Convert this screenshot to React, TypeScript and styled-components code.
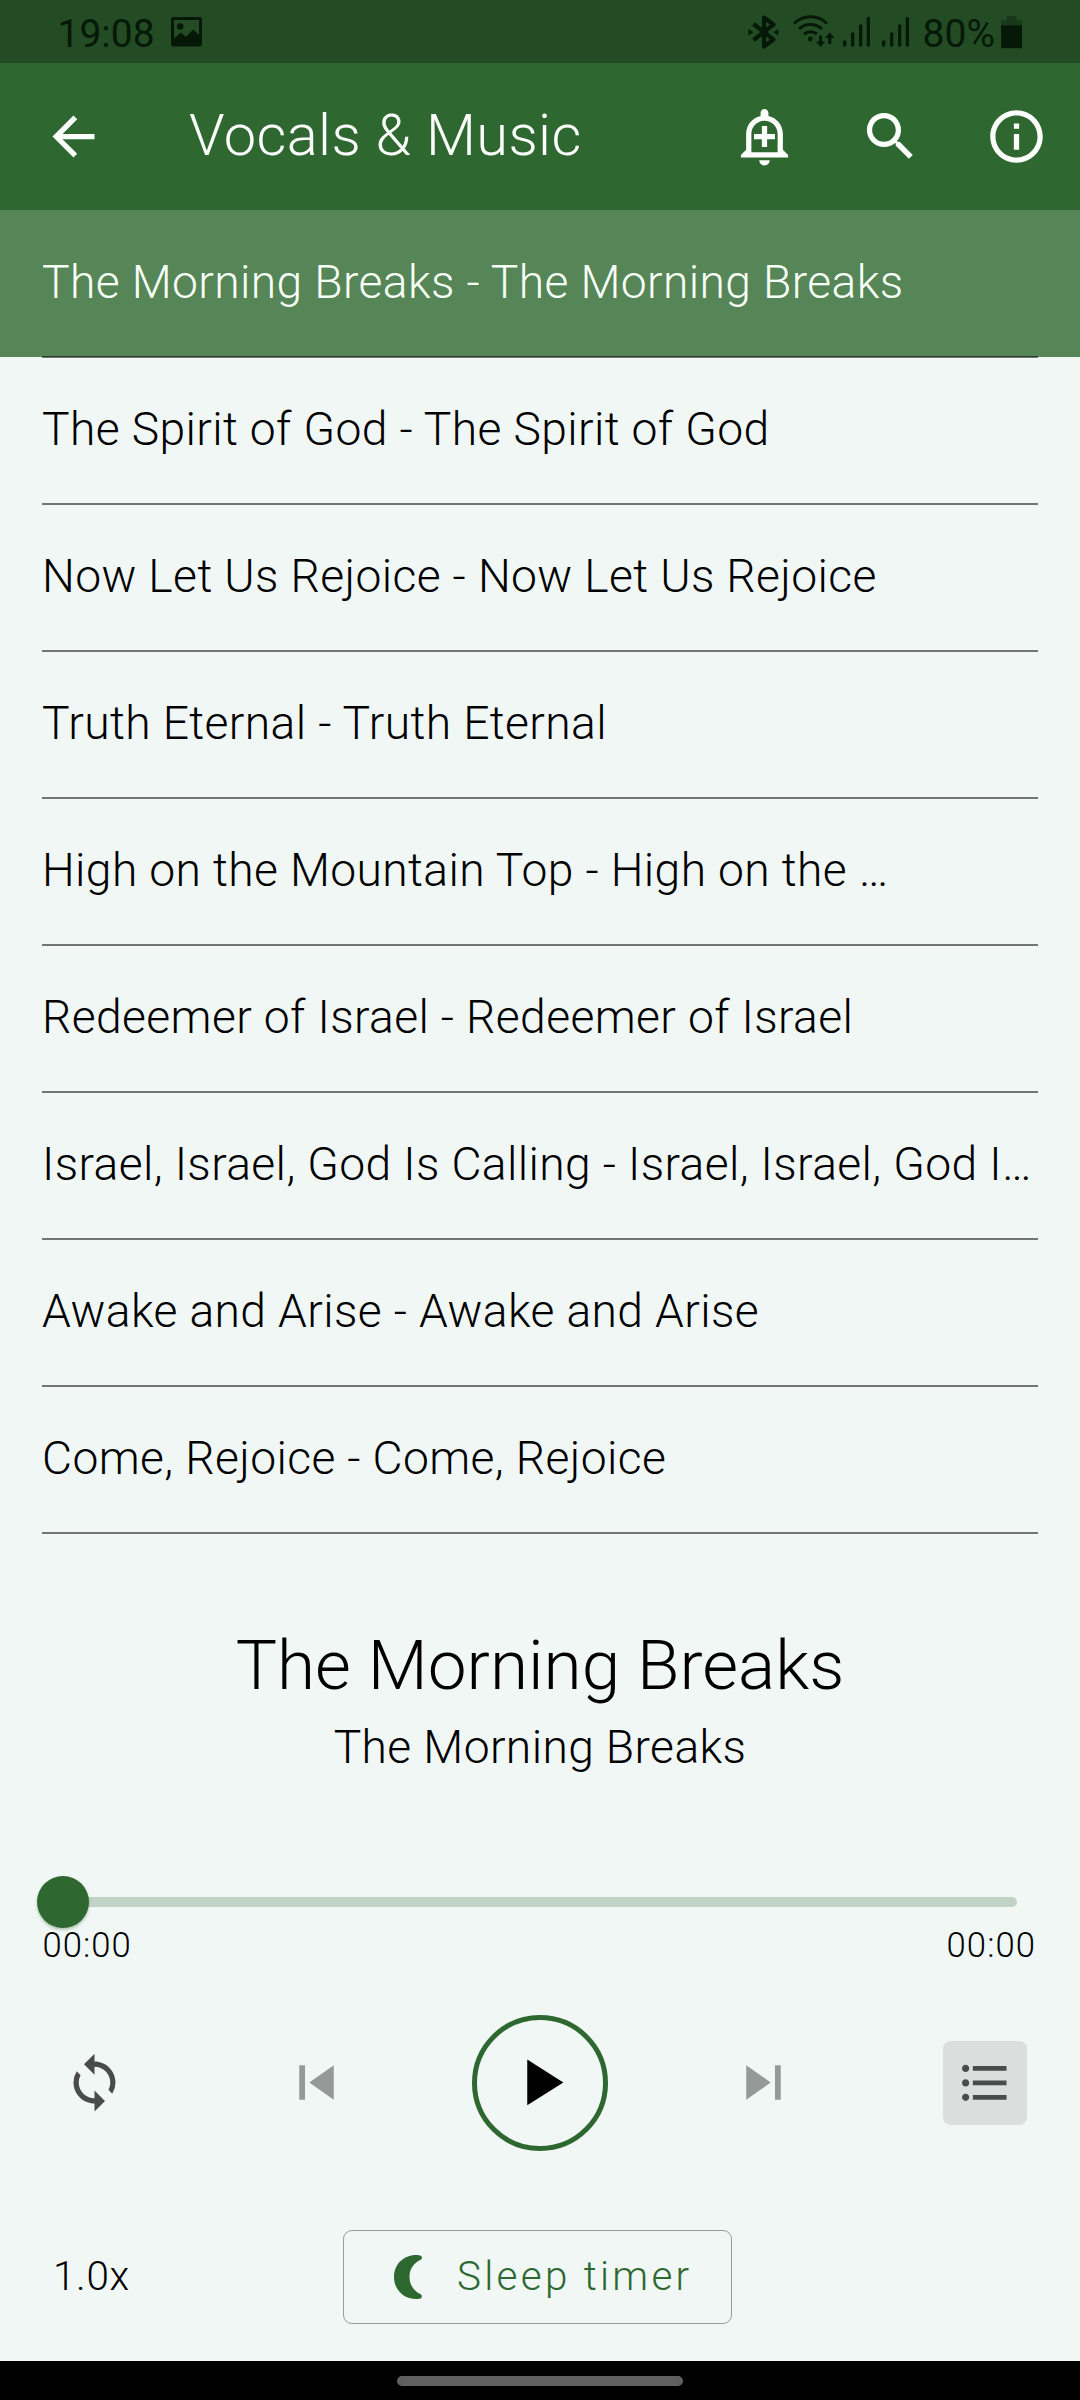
import React from "react";
import styled, { createGlobalStyle } from "styled-components";
import {
  MdArrowBack,
  MdFormatListBulleted,
  MdInfoOutline,
  MdPlayArrow,
  MdSearch,
  MdSkipNext,
  MdSkipPrevious,
  MdSync,
} from "react-icons/md";

const color = {
  primary: "#2e6830",
  primaryDark: "#234c24",
  selected: "#568558",
  surface: "#f0f7f5",
  statusInk: "#061807",
  icon: "#4a4c4b",
  disabled: "#959998",
};

const GlobalStyle = createGlobalStyle`
  * { box-sizing: border-box; }
  body {
    margin: 0;
    background: ${color.surface};
    font-family: Roboto, "Noto Sans", sans-serif;
    font-weight: 300;
    color: #000;
  }
  button {
    margin: 0;
    padding: 0;
    border: 0;
    background: none;
    font: inherit;
    color: inherit;
  }
  svg { display: block; flex: none; }
`;

const Screen = styled.div`
  display: flex;
  flex-direction: column;
  width: 1080px;
  height: 2400px;
  overflow: hidden;
  background: ${color.surface};
`;

/* ---------- system status bar ---------- */

const StatusBar = styled.div`
  display: flex;
  align-items: center;
  justify-content: space-between;
  height: 63px;
  padding: 0 58px 0 57.5px;
  background: ${color.primaryDark};
  color: ${color.statusInk};
`;

const StatusGroup = styled.div`
  display: flex;
  align-items: center;
`;

const StatusText = styled.span`
  padding-top: 4px;
  font-size: 39px;
  font-weight: 400;
  line-height: 40px;
`;

const Spacer = styled.span<{ $w: number }>`
  flex: none;
  width: ${(p) => p.$w}px;
`;

const PictureIcon = () => (
  <svg width="31" height="34" viewBox="0 0 31 34" fill="currentColor">
    <path
      fillRule="evenodd"
      d="M2.500 2h26A2.500 2.500 0 0 1 31 4.500V29a2.500 2.500 0 0 1-2.500 2.500h-26A2.500 2.500 0 0 1 0 29V4.500A2.500 2.500 0 0 1 2.500 2zM3 5v18.500l6.800-6 5 4.200 7.500-7.200 5.700 5.500V5z"
    />
    <circle cx="9.200" cy="11.500" r="3.300" />
  </svg>
);

const BluetoothIcon = () => (
  <svg width="32" height="34" viewBox="0 0 32 34">
    <path
      d="M5.500 9l20 15.500-9.500 7V2.500l9.500 7L5.500 25"
      fill="none"
      stroke="currentColor"
      strokeWidth="4.200"
      strokeLinejoin="round"
    />
    <path d="M0.500 14l5 3.300-5 3.300zM30.500 14l-5 3.300 5 3.300z" fill="currentColor" />
  </svg>
);

const WifiIcon = () => (
  <svg width="42" height="34" viewBox="0 0 42 34">
    <g fill="none" stroke="currentColor" strokeWidth="3">
      <path d="M1 8.500a23.500 23.500 0 0 1 33 0" />
      <path d="M6 14a17 17 0 0 1 23 0" />
      <path d="M11 19.200a9.800 9.800 0 0 1 13 0" />
      <path d="M27.500 20.500v8M36.800 29v-8" />
    </g>
    <circle cx="17.300" cy="24" r="2.400" fill="currentColor" />
    <path d="M22.700 26.500l4.800 5.500 4.800-5.500zM32 23l4.800-5.500 4.800 5.500z" fill="currentColor" />
  </svg>
);

const SignalIcon = () => (
  <svg width="27" height="34" viewBox="0 0 27 34" fill="currentColor">
    <rect x="0" y="25.500" width="3.300" height="6" rx="0.800" />
    <rect x="8" y="17.500" width="3.300" height="14" rx="0.800" />
    <rect x="16" y="9.500" width="3.300" height="22" rx="0.800" />
    <rect x="23.700" y="2" width="3.300" height="29.500" rx="0.800" />
  </svg>
);

const BatteryIcon = () => (
  <svg width="21" height="34" viewBox="0 0 21 34" fill="currentColor">
    <path d="M5.500 1h10v4.500H21v5H0v-5h5.500z" opacity="0.350" />
    <path d="M0 10.300h21V33.200H0z" />
  </svg>
);

/* ---------- app bar ---------- */

const AppBar = styled.header`
  display: flex;
  align-items: center;
  height: 147px;
  background: ${color.primary};
  color: #fcfffc;
`;

const BarButton = styled.button<{ $w?: number }>`
  display: flex;
  align-items: center;
  justify-content: center;
  width: ${(p) => p.$w ?? 126}px;
  height: 147px;
`;

const BarActions = styled.div`
  display: flex;
  margin-right: 1px;
`;

const BarTitle = styled.h1`
  flex: 1;
  margin: 0;
  padding: 0 0 4px 42px;
  font-size: 57.75px;
  font-weight: 300;
  line-height: 68px;
  letter-spacing: 0.39px;
  white-space: nowrap;
`;

const AddAlertIcon = () => (
  <svg width="63" height="63" viewBox="0 0 24 24" fill="currentColor">
    <path d="M10.010 21.010c0 1.100.89 1.990 1.990 1.990s1.990-.89 1.990-1.990h-3.980zM12 6c2.760 0 5 2.240 5 5v7H7v-7c0-2.760 2.240-5 5-5zm0-4.500c-.83 0-1.500.67-1.500 1.500v1.170C7.360 4.850 5 7.650 5 11v6l-2 2v1h18v-1l-2-2v-6c0-3.350-2.360-6.150-5.500-6.830V3c0-.83-.67-1.500-1.500-1.500zM13 8h-2v3H8v2h3v3h2v-3h3v-2h-3V8z" />
  </svg>
);

/* ---------- track list ---------- */

const TrackList = styled.ul`
  margin: 0;
  padding: 0;
  list-style: none;
`;

const Track = styled.li<{ $selected: boolean }>`
  position: relative;
  height: 147px;
  padding: 0 42px;
  background: ${(p) => (p.$selected ? color.selected : "transparent")};
  color: ${(p) => (p.$selected ? "#f8fff6" : "#000")};
  font-size: 46.2px;
  line-height: 145px;
  letter-spacing: 0.39px;
  white-space: nowrap;

  &::after {
    content: "";
    position: absolute;
    left: 42px;
    right: 42px;
    bottom: -1px;
    height: 2px;
    background: rgba(0, 0, 0, 0.52);
  }
`;

const tracks = [
  "The Morning Breaks - The Morning Breaks",
  "The Spirit of God - The Spirit of God",
  "Now Let Us Rejoice - Now Let Us Rejoice",
  "Truth Eternal - Truth Eternal",
  "High on the Mountain Top - High on the …",
  "Redeemer of Israel - Redeemer of Israel",
  "Israel, Israel, God Is Calling - Israel, Israel, God I…",
  "Awake and Arise - Awake and Arise",
  "Come, Rejoice - Come, Rejoice",
];

/* ---------- player ---------- */

const Player = styled.section`
  display: flex;
  flex-direction: column;
  flex: 1;
  padding-top: 92px;
`;

const NowPlaying = styled.h2`
  margin: 0;
  font-size: 69.3px;
  font-weight: 300;
  line-height: 82px;
  text-align: center;
`;

const Album = styled.p`
  margin: 13px 0 0;
  font-size: 46.2px;
  line-height: 54px;
  letter-spacing: 0.39px;
  text-align: center;
`;

const Slider = styled.div`
  position: relative;
  display: flex;
  align-items: center;
  height: 44px;
  margin-top: 106px;
  padding: 0 63px 0 58px;
`;

const SliderTrack = styled.div`
  flex: 1;
  height: 10px;
  border-radius: 5px;
  background: #c1d3c5;
`;

const SliderThumb = styled.div`
  position: absolute;
  left: 36.5px;
  top: -4.5px;
  width: 52.5px;
  height: 52.5px;
  border-radius: 50%;
  background: ${color.primary};
  box-shadow: 0 2px 3px rgba(30, 90, 30, 0.3);
`;

const Times = styled.div`
  display: flex;
  justify-content: space-between;
  padding: 1px 44px 0 42.5px;
  font-size: 34.65px;
  line-height: 41px;
  letter-spacing: 1.05px;
`;

const Controls = styled.div`
  display: grid;
  grid-template-columns: 1fr auto 1fr;
  align-items: center;
  height: 137px;
  margin-top: 48px;
`;

const Transport = styled.div`
  display: flex;
  align-items: center;
  gap: 121px;
  color: ${color.disabled};
`;

const RepeatButton = styled.button`
  justify-self: start;
  margin-left: 63px;
  color: ${color.icon};
`;

const PlayButton = styled.button`
  display: flex;
  align-items: center;
  justify-content: center;
  width: 136px;
  height: 136px;
  border: 5px solid ${color.primary};
  border-radius: 50%;
  color: #000;
`;

const QueueButton = styled.button`
  display: flex;
  align-items: center;
  justify-content: center;
  justify-self: end;
  width: 84px;
  height: 84px;
  margin-right: 53px;
  border-radius: 8px;
  background: #dcdddd;
  color: ${color.icon};
`;

const Extras = styled.div`
  display: flex;
  align-items: center;
  height: 94px;
  margin-top: 79px;
  padding-left: 53px;
  font-size: 40.4px;
`;

const Speed = styled.span`
  width: 290px;
  padding-bottom: 1px;
  letter-spacing: 0.66px;
`;

const SleepButton = styled.button`
  display: flex;
  align-items: center;
  gap: 35px;
  width: 389px;
  height: 94px;
  padding: 0 0 1px 50px;
  border: 1px solid #989c9a;
  border-radius: 9px;
  color: ${color.primary};
  letter-spacing: 3.28px;
  white-space: nowrap;
`;

const MoonIcon = () => (
  <svg width="28" height="44" viewBox="0 0 28 44" fill="currentColor">
    <path d="M22 0c2 0 3.700.200 5 .800 1.200.800 1.200 3.200-.300 4C19.800 8 15.500 14 15.500 22s4.300 14 11.200 17.200c1.500.800 1.500 3.200.300 4-1.300.600-3 .800-5 .800C9.500 44 0 34.500 0 22S9.500 0 22 0z" />
  </svg>
);

/* ---------- gesture bar ---------- */

const GestureBar = styled.div`
  display: flex;
  align-items: center;
  justify-content: center;
  height: 39px;
  background: #000;
`;

const GestureHandle = styled.div`
  width: 286px;
  height: 10px;
  border-radius: 5px;
  background: #606060;
`;

export default function App() {
  return (
    <Screen>
      <GlobalStyle />
      <StatusBar>
        <StatusGroup>
          <StatusText>19:08</StatusText>
          <Spacer $w={16.5} />
          <PictureIcon />
        </StatusGroup>
        <StatusGroup>
          <BluetoothIcon />
          <Spacer $w={13} />
          <WifiIcon />
          <Spacer $w={8} />
          <SignalIcon />
          <Spacer $w={12} />
          <SignalIcon />
          <Spacer $w={13.5} />
          <StatusText>80%</StatusText>
          <Spacer $w={6} />
          <BatteryIcon />
        </StatusGroup>
      </StatusBar>

      <AppBar>
        <BarButton $w={147} aria-label="Back">
          <MdArrowBack size={63} />
        </BarButton>
        <BarTitle>Vocals &amp; Music</BarTitle>
        <BarActions>
          <BarButton aria-label="Add reminder">
            <AddAlertIcon />
          </BarButton>
          <BarButton aria-label="Search">
            <MdSearch size={63} />
          </BarButton>
          <BarButton aria-label="Information">
            <MdInfoOutline size={63} />
          </BarButton>
        </BarActions>
      </AppBar>

      <TrackList>
        {tracks.map((title, i) => (
          <Track key={title} $selected={i === 0}>
            {title}
          </Track>
        ))}
      </TrackList>

      <Player>
        <NowPlaying>The Morning Breaks</NowPlaying>
        <Album>The Morning Breaks</Album>
        <Slider>
          <SliderTrack />
          <SliderThumb />
        </Slider>
        <Times>
          <span>00:00</span>
          <span>00:00</span>
        </Times>
        <Controls>
          <RepeatButton aria-label="Repeat">
            <MdSync size={63} />
          </RepeatButton>
          <Transport>
            <MdSkipPrevious size={69} />
            <PlayButton aria-label="Play">
              <MdPlayArrow size={78.75} />
            </PlayButton>
            <MdSkipNext size={69} />
          </Transport>
          <QueueButton aria-label="Queue">
            <MdFormatListBulleted size={57.75} />
          </QueueButton>
        </Controls>
        <Extras>
          <Speed>1.0x</Speed>
          <SleepButton>
            <MoonIcon />
            Sleep timer
          </SleepButton>
        </Extras>
      </Player>

      <GestureBar>
        <GestureHandle />
      </GestureBar>
    </Screen>
  );
}
